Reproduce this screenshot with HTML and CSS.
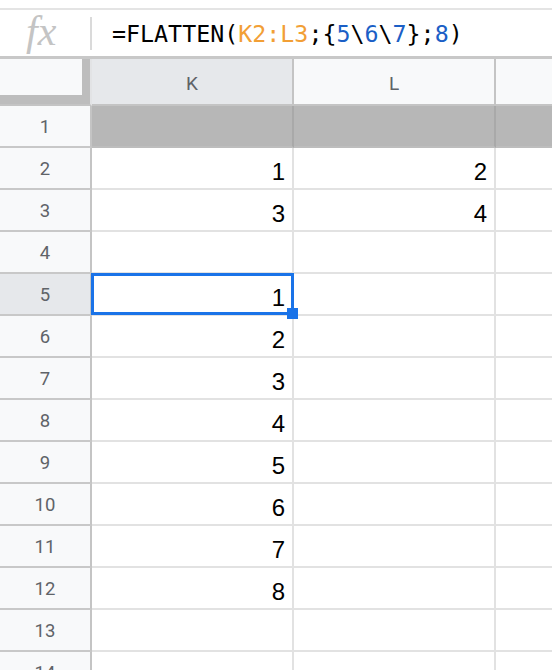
FILE: index.html
```html
<!DOCTYPE html>
<html>
<head>
<meta charset="utf-8">
<link rel="stylesheet" href="styles.css">
</head>
<body>
<div class="app">
  <div class="formula-bar">
    <div class="fx">fx</div>
    <div class="divider"></div>
    <div class="formula">=FLATTEN(<span class="ref">K2:L3</span>;{<span class="num">5</span>\<span class="num">6</span>\<span class="num">7</span>};<span class="num">8</span>)</div>
  </div>
  <div class="sheet">
    <div class="corner"><div class="corner-inner"></div></div>
    <div class="colhead sel">K</div>
    <div class="colhead">L</div>
    <div class="colhead last"></div>

    <div class="rowhead">1</div><div class="cell fill"></div><div class="cell fill"></div><div class="cell fill last"></div>
    <div class="rowhead">2</div><div class="cell">1</div><div class="cell">2</div><div class="cell last"></div>
    <div class="rowhead">3</div><div class="cell">3</div><div class="cell">4</div><div class="cell last"></div>
    <div class="rowhead">4</div><div class="cell"></div><div class="cell"></div><div class="cell last"></div>
    <div class="rowhead sel">5</div><div class="cell active">1<div class="selection"></div><div class="handle"></div></div><div class="cell"></div><div class="cell last"></div>
    <div class="rowhead">6</div><div class="cell">2</div><div class="cell"></div><div class="cell last"></div>
    <div class="rowhead">7</div><div class="cell">3</div><div class="cell"></div><div class="cell last"></div>
    <div class="rowhead">8</div><div class="cell">4</div><div class="cell"></div><div class="cell last"></div>
    <div class="rowhead">9</div><div class="cell">5</div><div class="cell"></div><div class="cell last"></div>
    <div class="rowhead">10</div><div class="cell">6</div><div class="cell"></div><div class="cell last"></div>
    <div class="rowhead">11</div><div class="cell">7</div><div class="cell"></div><div class="cell last"></div>
    <div class="rowhead">12</div><div class="cell">8</div><div class="cell"></div><div class="cell last"></div>
    <div class="rowhead">13</div><div class="cell"></div><div class="cell"></div><div class="cell last"></div>
    <div class="rowhead">14</div><div class="cell"></div><div class="cell"></div><div class="cell last"></div>
  </div>
</div>
</body>
</html>
```

FILE: styles.css
```css
* { box-sizing: border-box; }
html, body {
  margin: 0;
  padding: 0;
  background: #ffffff;
  width: 552px;
  height: 670px;
  overflow: hidden;
}
.app {
  width: 552px;
  height: 670px;
  overflow: hidden;
  padding-top: 8px;
}
.formula-bar {
  height: 51px;
  border-top: 2px solid #e4e4e4;
  border-bottom: 3px solid #c8c8c8;
  display: flex;
  align-items: center;
}
.fx {
  width: 90px;
  padding-left: 26px;
  font-family: "Liberation Serif", serif;
  font-style: italic;
  font-size: 42px;
  color: #c4c4c4;
  line-height: 1;
  margin-top: -4px;
}
.divider {
  width: 2px;
  height: 33px;
  background: #dadada;
}
.formula {
  padding-left: 20px;
  font-family: "DejaVu Sans Mono", monospace;
  font-size: 23.3px;
  color: #000;
}
.formula .ref { color: #f29f36; }
.formula .num { color: #1b5fc6; }

.sheet {
  display: grid;
  grid-template-columns: 92px 202px 202px 1fr;
  grid-template-rows: 47px repeat(14, 42px);
}
.corner {
  background: #f8f9fa;
  border-right: 2px solid #e2e3e5;
  border-bottom: 2px solid #c4c4c4;
}
.corner-inner {
  width: 90px;
  height: 45px;
  border-right: 8px solid #bdbdbd;
  border-bottom: 9px solid #bdbdbd;
  background: #f8f9fa;
}
.colhead {
  background: #f8f9fa;
  border-right: 2px solid #c4c4c4;
  border-bottom: 2px solid #c4c4c4;
  font-family: Roboto, "Liberation Sans", sans-serif;
  font-size: 19px;
  color: #5f6368;
  display: flex;
  align-items: center;
  justify-content: center;
  padding-top: 3px;
}
.colhead.sel { background: #e6e8eb; }
.colhead.last { border-right: none; }
.rowhead {
  background: #f8f9fa;
  border-right: 2px solid #c4c4c4;
  border-bottom: 2px solid #c8c8c8;
  font-family: Roboto, "Liberation Sans", sans-serif;
  font-size: 18.5px;
  color: #5f6368;
  display: flex;
  align-items: center;
  justify-content: center;
  padding-top: 2px;
}
.rowhead.sel { background: #e6e8eb; }
.cell {
  position: relative;
  border-right: 2px solid #e2e2e2;
  border-bottom: 2px solid #e2e2e2;
  font-family: "Liberation Sans", Arial, sans-serif;
  font-size: 24px;
  color: #000;
  text-align: right;
  padding-right: 7px;
  padding-top: 4px;
  line-height: 40px;
  height: 42px;
}
.cell.last { border-right: none; }
.cell.fill {
  background: #b7b7b7;
  border-right-color: #a9a9a9;
  border-bottom-color: #bdbdbd;
}
.cell.active { z-index: 3; }
.selection {
  position: absolute;
  left: -1px;
  top: -1px;
  width: 203px;
  height: 42px;
  border: 3px solid #1a73e8;
}
.handle {
  position: absolute;
  z-index: 4;
  left: 195px;
  top: 34px;
  width: 11px;
  height: 11px;
  background: #1a73e8;
}
```
